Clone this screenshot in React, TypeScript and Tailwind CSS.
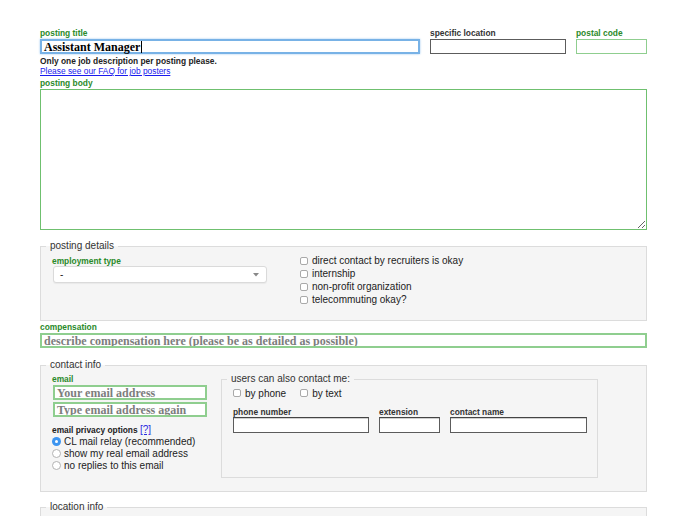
const sans = "font-['Liberation_Sans',Arial,sans-serif]";
const serif = "font-['Liberation_Serif','Times_New_Roman',serif]";

function Label({ text, green = true, className = "leading-[11px]" }: { text: string; green?: boolean; className?: string }) {
  return (
    <div className={`text-[8.4px] font-bold ${className} ${green ? "text-[#2a8a2a]" : "text-[#333]"}`}>{text}</div>
  );
}

function GreenInput({ placeholder, className = "" }: { placeholder?: string; className?: string }) {
  return (
    <div className={`flex h-[15px] items-center overflow-hidden border-2 border-[#8fce8f] bg-white pl-[2px] ${className}`}>
      {placeholder && (
        <span className={`${serif} whitespace-nowrap text-[12px] font-bold leading-none text-[#7d7d7d]`}>{placeholder}</span>
      )}
    </div>
  );
}

function DarkInput({ className = "" }: { className?: string }) {
  return <div className={`h-[16px] border border-[#5c5c5c] border-t-[#444] bg-white shadow-[inset_0_1px_0_#d0d0d0] ${className}`} />;
}

function Box() {
  return <span className="mr-[4px] h-[8px] w-[8px] rounded-[2px] border border-[#a9a9a9] bg-white" />;
}

function Check({ label }: { label: string }) {
  return (
    <div className="flex h-[13px] items-center">
      <Box />
      <span>{label}</span>
    </div>
  );
}

function Radio({ label, checked = false }: { label: string; checked?: boolean }) {
  return (
    <div className="flex h-[12px] items-center">
      {checked ? (
        <span className="mr-[3px] flex h-[9px] w-[9px] items-center justify-center rounded-full bg-[#3d95f0]">
          <span className="h-[3px] w-[3px] rounded-full bg-white" />
        </span>
      ) : (
        <span className="mr-[3px] h-[9px] w-[9px] rounded-full border border-[#b3b3b3] bg-white" />
      )}
      <span>{label}</span>
    </div>
  );
}

export default function App() {
  return (
    <div className={`${sans} h-[516px] w-[688px] overflow-hidden bg-white pl-[40px] pt-[28px] text-[10px] text-[#222]`}>
      <div className="w-[607px]">
        {/* title row */}
        <div className="flex gap-[10px]">
          <div className="w-[380px]">
            <Label text="posting title" />
            <div className="flex h-[15px] items-center border-2 border-[#78b2e6] bg-white pl-[2px] shadow-[0_0_2px_#9cc8f0]">
              <span className={`${serif} text-[12px] font-bold leading-none text-black`}>Assistant Manager</span>
              <span className="ml-[1px] h-[12px] w-px bg-black" />
            </div>
          </div>
          <div className="w-[136px]">
            <Label text="specific location" green={false} />
            <div className="h-[15px] border border-[#5c5c5c] bg-white" />
          </div>
          <div className="w-[71px]">
            <Label text="postal code" />
            <div className="h-[15px] border border-[#8fce8f] bg-white" />
          </div>
        </div>

        <div className="mt-[2px] text-[8.4px] font-bold leading-[10px] text-[#222]">Only one job description per posting please.</div>
        <a href="#" className="block text-[8.4px] leading-[10px] text-[#1a1aee] underline">Please see our FAQ for job posters</a>
        <div className="mt-[2px]">
          <Label text="posting body" />
        </div>
        <textarea className="block h-[141px] w-full resize border border-[#6fc06f] bg-white outline-none" />

        {/* posting details */}
        <fieldset className="mt-[10px] h-[81px] border border-[#dcdcdc] bg-[#f5f5f5] pl-[5px] pr-[5px]">
          <legend className="px-[4px] text-[10px] leading-[12px] text-[#333]">posting details</legend>
          <div className="flex px-[6px] pt-[2px]">
            <div className="w-[248px] pt-[2px]">
              <Label text="employment type" />
              <div className="-mt-px ml-[1px] flex h-[17px] w-[214px] items-center justify-between rounded-[3px] border border-[#dadada] bg-white pl-[6px] pr-[7px] shadow-[0_1px_1px_rgba(0,0,0,0.05)]">
                <span className="text-[10px] leading-none">-</span>
                <svg width="6" height="4" viewBox="0 0 6 4">
                  <path d="M0 0 L6 0 L3 3.5 Z" fill="#888" />
                </svg>
              </div>
            </div>
            <div>
              <Check label="direct contact by recruiters is okay" />
              <Check label="internship" />
              <Check label="non-profit organization" />
              <Check label="telecommuting okay?" />
            </div>
          </div>
        </fieldset>

        {/* compensation */}
        <div className="mt-px">
          <Label text="compensation" />
          <GreenInput placeholder="describe compensation here (please be as detailed as possible)" />
        </div>

        {/* contact info */}
        <fieldset className="mt-[11px] h-[133px] border border-[#dcdcdc] bg-[#f5f5f5] pl-[5px] pr-[5px]">
          <legend className="px-[4px] text-[10px] leading-[12px] text-[#333]">contact info</legend>
          <div className="flex px-[6px] pt-[3px]">
            <div className="w-[169px]">
              <Label text="email" />
              <GreenInput placeholder="Your email address" className="ml-px w-[154px]" />
              <GreenInput placeholder="Type email address again" className="ml-px mt-[2px] w-[154px]" />
              <div className="mt-[8px] text-[8.4px] font-bold leading-[9px] text-[#222]">
                email privacy options <a href="#" className="text-[10px] font-normal text-[#2a2ae0] underline">[?]</a>
              </div>
              <Radio label="CL mail relay (recommended)" checked />
              <Radio label="show my real email address" />
              <Radio label="no replies to this email" />
            </div>
            <fieldset className="-mt-px h-[105px] w-[377px] border border-[#dcdcdc] pl-[5px]">
              <legend className="px-[4px] text-[10px] leading-[12px] text-[#333]">users can also contact me:</legend>
              <div className="px-[6px]">
                <div className="mt-[2px] flex h-[12px] items-center gap-[14px]">
                  <div className="flex items-center">
                    <Box />
                    <span>by phone</span>
                  </div>
                  <div className="flex items-center">
                    <Box />
                    <span>by text</span>
                  </div>
                </div>
                <div className="mt-[8px] flex gap-[10px]">
                  <div className="w-[136px]">
                    <Label text="phone number" green={false} className="leading-[10px]" />
                    <DarkInput />
                  </div>
                  <div className="w-[61px]">
                    <Label text="extension" green={false} className="leading-[10px]" />
                    <DarkInput />
                  </div>
                  <div className="w-[137px]">
                    <Label text="contact name" green={false} className="leading-[10px]" />
                    <DarkInput />
                  </div>
                </div>
              </div>
            </fieldset>
          </div>
        </fieldset>

        {/* location info */}
        <fieldset className="mt-[9px] h-[40px] border border-[#dcdcdc] bg-[#f5f5f5] pl-[5px] pr-[5px]">
          <legend className="px-[4px] text-[10px] leading-[12px] text-[#333]">location info</legend>
        </fieldset>
      </div>
    </div>
  );
}
